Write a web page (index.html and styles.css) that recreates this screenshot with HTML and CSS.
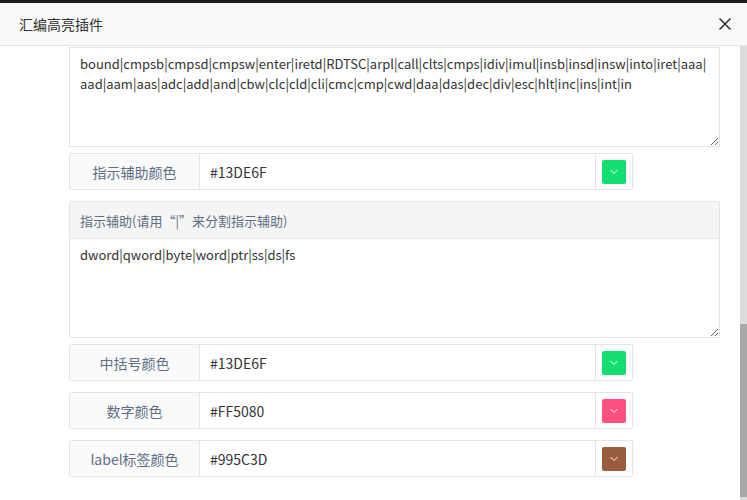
FILE: index.html
```html
<!DOCTYPE html>
<html lang="zh">
<head>
<meta charset="utf-8">
<title>汇编高亮插件</title>
<link rel="stylesheet" href="styles.css">
</head>
<body>
<div class="backdrop-strip"></div>
<div class="modal">
  <div class="modal-header">
    <span class="modal-title">汇编高亮插件</span>
    <button class="close" aria-label="close">
      <svg width="14" height="14" viewBox="0 0 14 14"><path d="M1.5 1.5 L12.5 12.5 M12.5 1.5 L1.5 12.5" stroke="#333" stroke-width="1.6" fill="none"/></svg>
    </button>
  </div>
  <div class="modal-body">
    <div class="content">
      <textarea class="code first">bound|cmpsb|cmpsd|cmpsw|enter|iretd|RDTSC|arpl|call|clts|cmps|idiv|imul|insb|insd|insw|into|iret|aaa|aad|aam|aas|adc|add|and|cbw|clc|cld|cli|cmc|cmp|cwd|daa|das|dec|div|esc|hlt|inc|ins|int|in</textarea>

      <div class="group g1">
        <span class="addon label">指示辅助颜色</span>
        <input class="value" value="#13DE6F">
        <span class="addon picker"><span class="swatch green"><svg width="10" height="6" viewBox="0 0 10 6"><path d="M1.5 1 L5 4.5 L8.5 1" stroke="#fff" stroke-width="1" fill="none"/></svg></span></span>
      </div>

      <div class="panel">
        <div class="panel-heading">指示辅助(请用“|”来分割指示辅助)</div>
        <textarea class="code inner">dword|qword|byte|word|ptr|ss|ds|fs</textarea>
      </div>

      <div class="group g2">
        <span class="addon label">中括号颜色</span>
        <input class="value" value="#13DE6F">
        <span class="addon picker"><span class="swatch green"><svg width="10" height="6" viewBox="0 0 10 6"><path d="M1.5 1 L5 4.5 L8.5 1" stroke="#fff" stroke-width="1" fill="none"/></svg></span></span>
      </div>

      <div class="group">
        <span class="addon label">数字颜色</span>
        <input class="value" value="#FF5080">
        <span class="addon picker"><span class="swatch pink"><svg width="10" height="6" viewBox="0 0 10 6"><path d="M1.5 1 L5 4.5 L8.5 1" stroke="#fff" stroke-width="1" fill="none"/></svg></span></span>
      </div>

      <div class="group">
        <span class="addon label">label标签颜色</span>
        <input class="value" value="#995C3D">
        <span class="addon picker"><span class="swatch brown"><svg width="10" height="6" viewBox="0 0 10 6"><path d="M1.5 1 L5 4.5 L8.5 1" stroke="#fff" stroke-width="1" fill="none"/></svg></span></span>
      </div>
    </div>
    <div class="scrollbar"><div class="thumb"></div></div>
  </div>
</div>
</body>
</html>
```
FILE: styles.css
```css
html, body {
  margin: 0;
  padding: 0;
  background: #fff;
  overflow: hidden;
  font-family: "Noto Sans CJK SC", sans-serif;
}
.backdrop-strip {
  height: 3px;
  background: #1c1d22;
}
.modal {
  display: flex;
  flex-direction: column;
  height: 497px;
}
.modal-header {
  height: 42px;
  flex: none;
  background: #f8f8f8;
  border-bottom: 1px solid #e6e6e6;
  display: flex;
  align-items: center;
  justify-content: space-between;
  padding: 0 15px 0 19px;
}
.modal-title {
  font-size: 14px;
  color: #333;
}
.close {
  border: 0;
  background: none;
  padding: 0;
  width: 14px;
  height: 14px;
  display: flex;
}
.modal-body {
  flex: 1;
  display: flex;
  min-height: 0;
}
.content {
  flex: 1;
  padding: 0 20px 0 69px;
  display: flex;
  flex-direction: column;
  align-items: flex-start;
}
.scrollbar {
  width: 7px;
  flex: none;
  background: #dcdcdc;
  display: flex;
  flex-direction: column;
  justify-content: flex-end;
  padding-bottom: 3px;
}
.thumb {
  height: 173px;
  background: #a8a8a8;
}
.code {
  box-sizing: border-box;
  width: 651px;
  font-family: "Noto Sans CJK SC", sans-serif;
  font-size: 13px;
  line-height: 20px;
  color: #333;
  border: 1px solid #e3e3e3;
  padding: 6px 10px;
  margin: 0;
  outline: none;
  resize: vertical;
  background: #fff;
  display: block;
}
.code.first {
  height: 100px;
  margin-top: 1px;
}
.group {
  box-sizing: border-box;
  width: 564px;
  height: 37px;
  display: flex;
  border: 1px solid #e4e4e4;
  border-radius: 2px;
  margin-top: 11px;
}
.group.g1 {
  margin-top: 6px;
}
.group.g2 {
  margin-top: 6px;
}
.addon {
  display: flex;
  align-items: center;
  justify-content: center;
  background: #fafafa;
  flex: none;
}
.label {
  width: 129px;
  border-right: 1px solid #e4e4e4;
  font-size: 14px;
  color: #5f6f86;
}
.value {
  flex: 1;
  min-width: 0;
  border: 0;
  outline: none;
  padding: 0 10px;
  font-family: "Noto Sans CJK SC", sans-serif;
  font-size: 14px;
  color: #333;
  background: #fff;
}
.picker {
  width: 36px;
  border-left: 1px solid #e4e4e4;
  background: #fff;
}
.swatch {
  width: 24px;
  height: 24px;
  border-radius: 2px;
  display: flex;
  align-items: center;
  justify-content: center;
}
.green { background: #13de6f; }
.pink { background: #ff5080; }
.brown { background: #995c3d; }
.panel {
  box-sizing: border-box;
  width: 651px;
  margin-top: 11px;
  border: 1px solid #e4e4e4;
  border-radius: 2px;
}
.panel-heading {
  height: 36px;
  background: #f5f5f5;
  border-bottom: 1px solid #e6e6e6;
  display: flex;
  align-items: center;
  padding-left: 10px;
  font-size: 13px;
  color: #5f6f86;
}
.code.inner {
  border: 0;
  width: 100%;
  height: 98px;
  padding-top: 6px;
}
```
